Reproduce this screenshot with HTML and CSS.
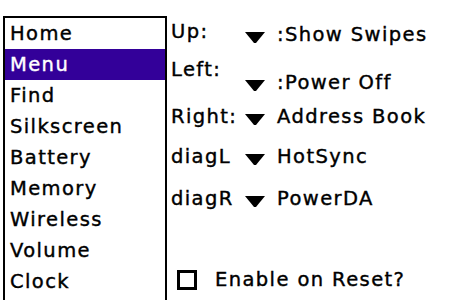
FILE: index.html
```html
<!DOCTYPE html>
<html>
<head>
<meta charset="utf-8">
<link rel="stylesheet" href="styles.css">
</head>
<body>
<div class="screen">
  <ul class="list">
    <li class="item">Home</li>
    <li class="item selected">Menu</li>
    <li class="item">Find</li>
    <li class="item">Silkscreen</li>
    <li class="item">Battery</li>
    <li class="item">Memory</li>
    <li class="item">Wireless</li>
    <li class="item">Volume</li>
    <li class="item">Clock</li>
  </ul>
  <div class="panel">
    <div class="row row-up">
      <span class="label">Up:</span>
      <span class="trigger trigger-up"><svg class="arrow" width="20" height="11" viewBox="0 0 20 11"><polygon points="0,0 20,0 11,11 9,11" fill="#000"/></svg><span>:Show Swipes</span></span>
    </div>
    <div class="row row-left">
      <span class="label">Left:</span>
      <span class="trigger trigger-left"><svg class="arrow" width="20" height="11" viewBox="0 0 20 11"><polygon points="0,0 20,0 11,11 9,11" fill="#000"/></svg><span>:Power Off</span></span>
    </div>
    <div class="row row-right">
      <span class="label">Right:</span>
      <span class="trigger"><svg class="arrow" width="20" height="11" viewBox="0 0 20 11"><polygon points="0,0 20,0 11,11 9,11" fill="#000"/></svg><span>Address Book</span></span>
    </div>
    <div class="row row-dl">
      <span class="label">diagL</span>
      <span class="trigger"><svg class="arrow" width="20" height="11" viewBox="0 0 20 11"><polygon points="0,0 20,0 11,11 9,11" fill="#000"/></svg><span>HotSync</span></span>
    </div>
    <div class="row row-dr">
      <span class="label">diagR</span>
      <span class="trigger"><svg class="arrow" width="20" height="11" viewBox="0 0 20 11"><polygon points="0,0 20,0 11,11 9,11" fill="#000"/></svg><span>PowerDA</span></span>
    </div>
    <label class="check">
      <span class="box"></span>
      <span class="check-text">Enable on Reset?</span>
    </label>
  </div>
</div>
</body>
</html>
```

FILE: styles.css
```css
html, body {
  margin: 0;
  padding: 0;
  background: #fff;
}
body {
  width: 450px;
  height: 300px;
  overflow: hidden;
  font-family: "DejaVu Sans", "Liberation Sans", sans-serif;
  font-size: 19.5px;
  letter-spacing: 1.4px;
  -webkit-text-stroke: 0.4px currentColor;
  color: #000;
}
.screen {
  display: flex;
  align-items: flex-start;
}
.list {
  list-style: none;
  margin: 16px 0 0 3px;
  padding: 0;
  width: 160px;
  height: 290px;
  border: 2px solid #000;
  border-bottom: none;
}
.item {
  height: 31px;
  line-height: 31px;
  padding-left: 5px;
  white-space: nowrap;
}
.selected {
  background: #330099;
  color: #fff;
}
.panel {
  display: flex;
  flex-direction: column;
  margin-left: 4px;
}
.row {
  display: flex;
  align-items: flex-start;
  line-height: 31px;
  height: 31px;
  white-space: nowrap;
}
.row-up { margin-top: 16px; }
.row-left { margin-top: 7px; }
.row-right { margin-top: 16px; }
.row-dl { margin-top: 9px; }
.row-dr { margin-top: 11px; }
.label {
  width: 74px;
  flex: none;
}
.trigger {
  display: flex;
  align-items: flex-start;
}
.trigger-up { padding-top: 3px; }
.trigger-left { padding-top: 13px; }
.arrow {
  flex: none;
  width: 20px;
  height: 11px;
  margin-top: 13px;
  margin-right: 12px;
}
.check {
  display: flex;
  align-items: center;
  margin-top: 50px;
  margin-left: 6px;
  line-height: 31px;
}
.box {
  flex: none;
  width: 14px;
  height: 14px;
  border: 3px solid #000;
  margin-right: 18px;
}
```
